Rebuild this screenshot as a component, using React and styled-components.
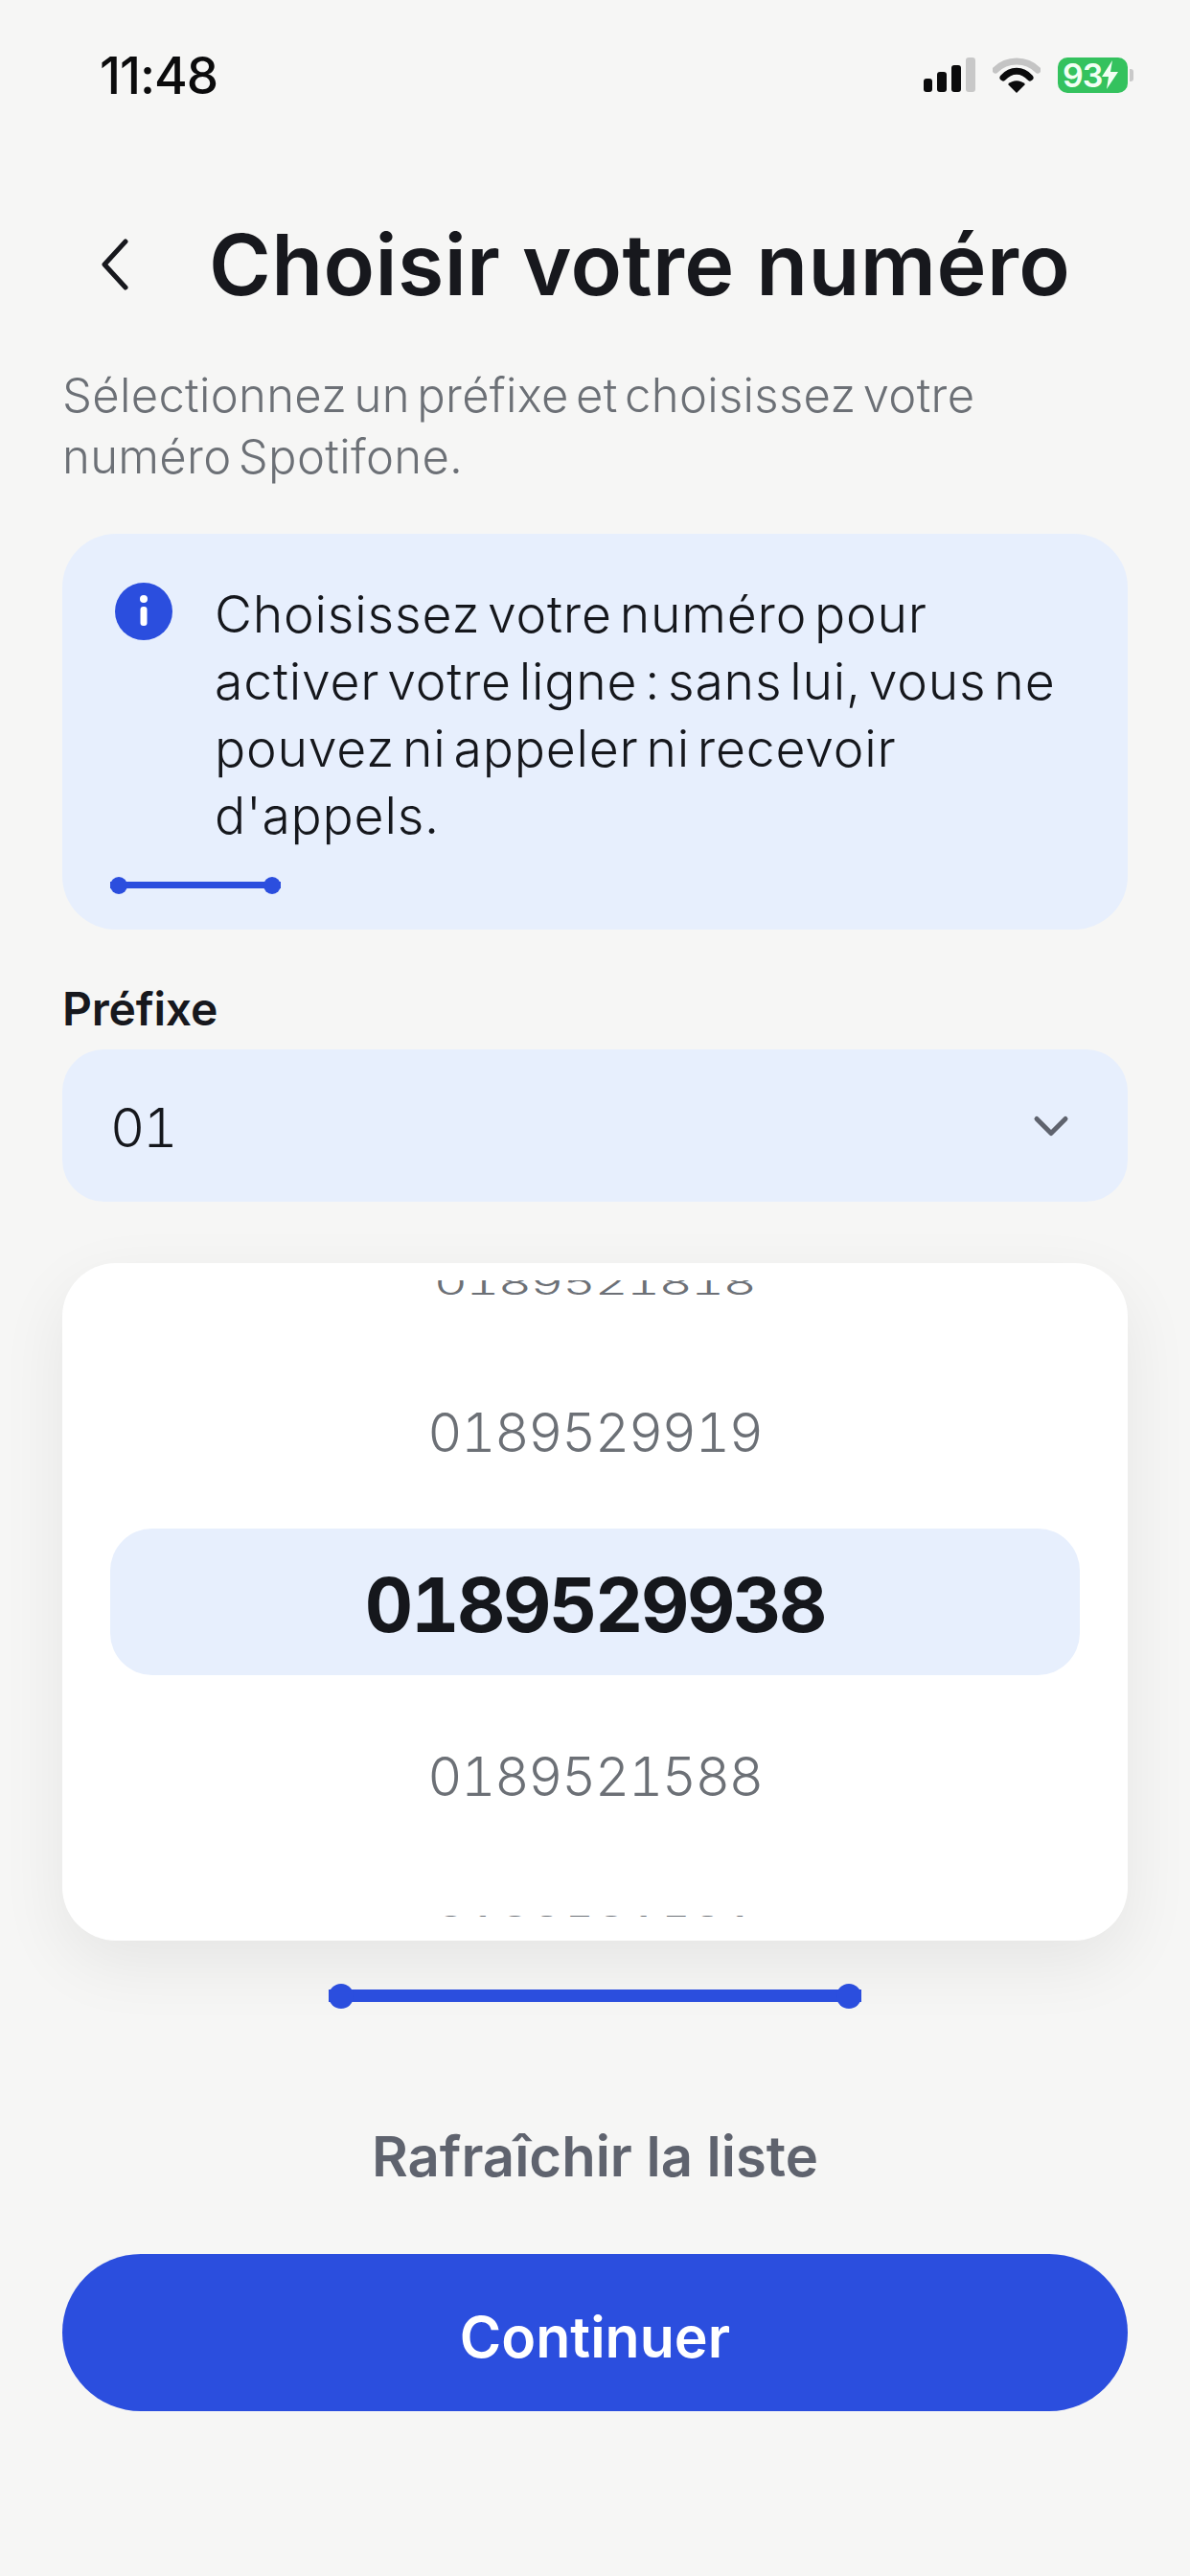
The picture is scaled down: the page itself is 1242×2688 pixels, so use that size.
import React from 'react';
import styled, { createGlobalStyle } from 'styled-components';
import { FiChevronDown } from 'react-icons/fi';

const GlobalStyle = createGlobalStyle`
  html, body {
    margin: 0;
    padding: 0;
    background: #f6f6f5;
  }
  * {
    box-sizing: border-box;
  }
`;

const Page = styled.div`
  width: 1242px;
  height: 2688px;
  overflow: hidden;
  padding: 0 65px;
  background: #f6f6f5;
  font-family: Inter, "Liberation Sans", sans-serif;
  color: #15171c;
`;

const StatusBar = styled.div`
  height: 156px;
  display: flex;
  align-items: flex-start;
  justify-content: space-between;
  padding: 55px 0 0 39px;
`;

const Time = styled.span`
  font-size: 53px;
  line-height: 48px;
  font-weight: 500;
  letter-spacing: -1px;
  color: #0b0b0c;
`;

const StatusIcons = styled.div`
  display: flex;
  align-items: center;
  gap: 18px;
  height: 40px;
  margin-top: 3px;
`;

const Battery = styled.div`
  position: relative;
  width: 73px;
  height: 37px;
  border-radius: 10px;
  background: #34c25e;
  color: #f2fff4;
  display: flex;
  align-items: center;
  padding-left: 5px;
  font-size: 34px;
  line-height: 37px;
  font-weight: 600;
  letter-spacing: -1px;

  &::after {
    content: '';
    position: absolute;
    right: -6px;
    top: 12px;
    width: 4px;
    height: 13px;
    border-radius: 0 3px 3px 0;
    background: #c9c9c9;
  }
`;

const Header = styled.div`
  height: 120px;
  margin-top: 60px;
  display: flex;
  align-items: center;
  padding-left: 40px;
  gap: 83px;
`;

const BackIcon = styled.svg`
  width: 30px;
  height: 56px;
  flex: none;
`;

const Title = styled.h1`
  margin: 0;
  font-size: 88px;
  line-height: 120px;
  font-weight: 600;
  letter-spacing: 0.4px;
  color: #17181d;
  white-space: nowrap;
`;

const Subtitle = styled.p`
  margin: 45px 0 0;
  font-size: 49px;
  line-height: 64px;
  font-weight: 300;
  letter-spacing: 0.3px;
  word-spacing: -6.7px;
  color: #6c7076;
`;

const InfoCard = styled.div`
  margin-top: 48px;
  height: 413px;
  border-radius: 56px;
  background: #e7effd;
  padding: 49px 50px 0;
`;

const InfoRow = styled.div`
  display: flex;
  align-items: flex-start;
  gap: 44px;
`;

const InfoIcon = styled.svg`
  width: 60px;
  height: 60px;
  flex: none;
  margin: 2px 0 0 5px;
`;

const InfoText = styled.p`
  margin: 0;
  font-size: 53.5px;
  line-height: 70px;
  font-weight: 300;
  letter-spacing: 0.8px;
  word-spacing: -8px;
  color: #15171c;
`;

const ScrollLine = styled.div`
  position: relative;
  width: ${({ $width }) => $width}px;
  height: ${({ $thick }) => $thick}px;
  background: #2b4ede;

  &::before,
  &::after {
    content: '';
    position: absolute;
    top: 50%;
    width: ${({ $dot }) => $dot}px;
    height: ${({ $dot }) => $dot}px;
    margin-top: ${({ $dot }) => -$dot / 2}px;
    border-radius: 50%;
    background: #2b4ede;
  }

  &::before {
    left: 0;
  }

  &::after {
    right: 0;
  }
`;

const InfoLine = styled(ScrollLine)`
  margin-top: 34px;
`;

const FieldLabel = styled.div`
  margin-top: 53px;
  font-size: 48px;
  line-height: 60px;
  font-weight: 600;
  letter-spacing: -0.2px;
  color: #17181d;
`;

const Select = styled.div`
  margin-top: 12px;
  height: 159px;
  border-radius: 44px;
  background: #e7effd;
  display: flex;
  align-items: center;
  justify-content: space-between;
  padding: 0 50px;
  font-size: 56px;
  font-weight: 300;
  font-feature-settings: 'tnum';
  letter-spacing: -2px;
  color: #15171c;

  span {
    padding-top: 4px;
  }

  svg {
    color: #5f636e;
    font-size: 60px;
  }
`;

const Picker = styled.div`
  margin-top: 64px;
  height: 707px;
  border-radius: 56px;
  background: #ffffff;
  padding-top: 18px;
  box-shadow: 0 24px 70px rgba(0, 0, 0, 0.07);
`;

const Wheel = styled.div`
  height: 664px;
  overflow: hidden;
  padding: 0 50px;
`;

const NumberRow = styled.div`
  height: ${({ $height }) => $height}px;
  margin-top: ${({ $offset }) => $offset || 0}px;
  display: flex;
  align-items: center;
  justify-content: center;
  font-size: 56px;
  font-weight: 300;
  font-feature-settings: 'tnum';
  letter-spacing: -1.3px;
  color: #6c7076;
`;

const FarRow = styled(NumberRow)`
  span {
    transform: scale(0.96, 0.6);
  }
`;

const SelectedRow = styled.div`
  height: 153px;
  padding-top: 6px;
  border-radius: 44px;
  background: #e7effd;
  display: flex;
  align-items: center;
  justify-content: center;
  font-size: 78px;
  font-weight: 700;
  font-feature-settings: 'tnum';
  letter-spacing: -2.4px;
  color: #15171c;
`;

const BottomLine = styled(ScrollLine)`
  margin: 51px auto 0;
`;

const RefreshLink = styled.div`
  margin-top: 126px;
  height: 70px;
  text-align: center;
  font-size: 58px;
  line-height: 70px;
  font-weight: 600;
  letter-spacing: 0;
  color: #5f636e;
`;

const ContinueButton = styled.button`
  display: block;
  width: 100%;
  height: 164px;
  margin-top: 67px;
  padding: 8px 0 0;
  border: none;
  border-radius: 82px;
  background: #2b4ede;
  color: #ffffff;
  font-family: inherit;
  font-size: 59px;
  font-weight: 600;
`;

const SignalIcon = () => (
  <svg width="54" height="36" viewBox="0 0 54 36">
    <rect x="0" y="22" width="9" height="14" rx="3" fill="#0b0b0c" />
    <rect x="14" y="15" width="10" height="21" rx="3" fill="#0b0b0c" />
    <rect x="29" y="8" width="10" height="28" rx="3" fill="#0b0b0c" />
    <rect x="44" y="0" width="10" height="36" rx="3" fill="#c8c8c8" />
  </svg>
);

const WifiIcon = () => (
  <svg width="50" height="38" viewBox="0 0 50 38">
    <path d="M3 14 C15 2 35 2 47 14" fill="none" stroke="#c4c4c4" strokeWidth="7" strokeLinecap="round" />
    <path d="M11 22 C19 13 31 13 39 22" fill="none" stroke="#0b0b0c" strokeWidth="7" strokeLinecap="round" />
    <path d="M16 29 C21 24 29 24 34 29 L25 38 Z" fill="#0b0b0c" />
  </svg>
);

const BoltIcon = () => (
  <svg width="17" height="30" viewBox="0 0 17 30">
    <path d="M11 0 L0 17 H7 L5 30 L17 12 H9 Z" fill="#f2fff4" />
  </svg>
);

export default function App() {
  return (
    <Page>
      <GlobalStyle />
      <StatusBar>
        <Time>11:48</Time>
        <StatusIcons>
          <SignalIcon />
          <WifiIcon />
          <Battery>
            93
            <BoltIcon />
          </Battery>
        </StatusIcons>
      </StatusBar>

      <Header>
        <BackIcon viewBox="0 0 30 56">
          <path d="M26 4 L4 28 L26 52" fill="none" stroke="#17181d" strokeWidth="5" strokeLinecap="round" strokeLinejoin="round" />
        </BackIcon>
        <Title>Choisir votre numéro</Title>
      </Header>

      <Subtitle>
        Sélectionnez un préfixe et choisissez votre
        <br />
        numéro Spotifone.
      </Subtitle>

      <InfoCard>
        <InfoRow>
          <InfoIcon viewBox="0 0 60 60">
            <circle cx="30" cy="30" r="30" fill="#2b4ede" />
            <circle cx="30" cy="17" r="4" fill="#ffffff" />
            <rect x="26.5" y="25" width="7" height="20" rx="3" fill="#ffffff" />
          </InfoIcon>
          <InfoText>
            Choisissez votre numéro pour
            <br />
            activer votre ligne : sans lui, vous ne
            <br />
            pouvez ni appeler ni recevoir
            <br />
            d'appels.
          </InfoText>
        </InfoRow>
        <InfoLine $width={178} $thick={7} $dot={18} />
      </InfoCard>

      <FieldLabel>Préfixe</FieldLabel>
      <Select>
        <span>01</span>
        <FiChevronDown />
      </Select>

      <Picker>
        <Wheel>
          <FarRow $height={112} $offset={-53}>
            <span>0189521818</span>
          </FarRow>
          <NumberRow $height={200}>0189529919</NumberRow>
          <SelectedRow>0189529938</SelectedRow>
          <NumberRow $height={212}>0189521588</NumberRow>
          <FarRow $height={104}>
            <span>0189521591</span>
          </FarRow>
        </Wheel>
      </Picker>

      <BottomLine $width={556} $thick={13} $dot={26} />

      <RefreshLink>Rafraîchir la liste</RefreshLink>
      <ContinueButton>Continuer</ContinueButton>
    </Page>
  );
}
